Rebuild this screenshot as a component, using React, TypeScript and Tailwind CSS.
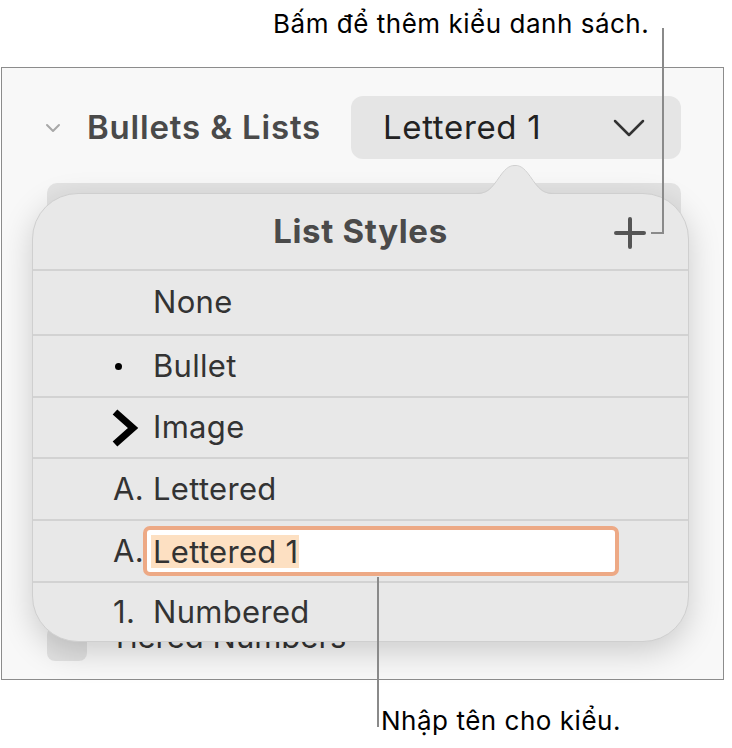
import React from "react";

function Row({
  marker,
  children,
  h,
}: {
  marker?: React.ReactNode;
  children: React.ReactNode;
  h: string;
}) {
  return (
    <div className={`flex items-center border-t-2 border-[#d2d2d2] ${h}`}>
      <div className="w-[80px] shrink-0" />
      <div className="w-[40px] shrink-0 flex items-center">{marker}</div>
      <div className="flex-1 flex items-center">{children}</div>
    </div>
  );
}

const rowText = "text-[31px] tracking-[0.01em] text-[#333]";

export default function App() {
  return (
    <div className="relative w-[732px] h-[748px] bg-white overflow-hidden font-['Inter','Liberation_Sans',sans-serif]">
      {/* top annotation */}
      <div className="h-[67px] pl-[273px] pt-[9px] text-[26px] leading-[30px] tracking-[0.02em] text-black">
        Bấm để thêm kiểu danh sách.
      </div>

      {/* frame */}
      <div className="ml-[1px] w-[723px] h-[613px] border border-[#8c8c8c] bg-[#f8f8f8]">
        <div className="flex items-center h-[63px] mt-[28px]">
          <div className="ml-[40px] w-[22px] flex items-center justify-center">
            <svg width="16" height="10" viewBox="0 0 16 10">
              <path d="M2 2 L8 8 L14 2" fill="none" stroke="#a8a8a8" strokeWidth="2" strokeLinecap="round" strokeLinejoin="round" />
            </svg>
          </div>
          <div className="ml-[23px] text-[33px] tracking-[0.025em] font-semibold text-[#4a4a4a]">Bullets &amp; Lists</div>
          <div className="ml-auto mr-[42px] w-[330px] h-[63px] rounded-[12px] bg-[#e5e5e5] pl-[32px] pr-[36px] flex items-center justify-between">
            <span className="text-[33px] tracking-[0.02em] text-[#222]">Lettered 1</span>
            <svg width="32" height="18" viewBox="0 0 32 18">
              <path d="M2 2 L16 16 L30 2" fill="none" stroke="#333" strokeWidth="2.5" strokeLinecap="round" strokeLinejoin="round" />
            </svg>
          </div>
        </div>
        <div className="mt-[24px] ml-[45px] mr-[42px] h-[56px] rounded-[10px] bg-[#e3e3e3]" />
        <div className="mt-[388px] flex items-start">
          <div className="ml-[45px] w-[40px] h-[34px] rounded-[8px] bg-[#e2e2e2]" />
          <div className="ml-[23px] mt-[-8px] text-[31px] leading-[36px] text-[#333]">Tiered Numbers</div>
        </div>
      </div>

      {/* bottom annotation */}
      <div className="pl-[381px] pt-[26px] text-[26px] leading-[30px] tracking-[0.02em] text-black">Nhập tên cho kiểu.</div>

      {/* popover */}
      <div className="absolute left-[32px] top-[193px] w-[657px] h-[449px] rounded-[46px] bg-[#e8e8e8] border border-[#cfcfcf] shadow-[0_10px_32px_rgba(0,0,0,0.18)] overflow-hidden flex flex-col">
        <div className="h-[75px] shrink-0 relative flex items-center justify-center">
          <span className="text-[33px] tracking-[0.02em] font-bold text-[#4a4a4a]">List Styles</span>
          <svg className="absolute left-[581px] top-[23px]" width="32" height="32" viewBox="0 0 32 32">
            <path d="M16 2 V30 M2 16 H30" stroke="#555" strokeWidth="4" strokeLinecap="round" />
          </svg>
        </div>
        <Row h="h-[65px]">
          <span className={rowText}>None</span>
        </Row>
        <Row
          h="h-[62px]"
          marker={<span className="ml-[2px] w-[7px] h-[7px] rounded-full bg-black" />}
        >
          <span className={rowText}>Bullet</span>
        </Row>
        <Row
          h="h-[61px]"
          marker={
            <svg width="30" height="40" viewBox="0 0 30 40" className="-ml-[2px]">
              <path d="M4 4 L22 20 L4 36" fill="none" stroke="#000" strokeWidth="7" strokeLinejoin="miter" />
            </svg>
          }
        >
          <span className={rowText}>Image</span>
        </Row>
        <Row h="h-[62px]" marker={<span className={rowText}>A.</span>}>
          <span className={rowText}>Lettered</span>
        </Row>
        <div className="flex items-center border-t-2 border-[#d2d2d2] h-[62px]">
          <div className="w-[80px] shrink-0" />
          <div className={`w-[30px] shrink-0 ${rowText}`}>A.</div>
          <div className="w-[476px] h-[50px] rounded-[7px] border-[4px] border-[#eda985] bg-white flex items-center pl-[4px]">
            <span className={`bg-[#fde0c2] leading-[33px] pl-[2px] ${rowText}`}>Lettered 1</span>
          </div>
        </div>
        <Row h="flex-1" marker={<span className={rowText}>1.</span>}>
          <span className={rowText}>Numbered</span>
        </Row>
      </div>

      {/* arrow */}
      <svg className="absolute left-[475px] top-[163px]" width="80" height="34" viewBox="0 0 80 34">
        <path d="M0 31 C10 31 14 29 22 18 C30 6 34 3 40 3 C46 3 50 6 58 18 C66 29 70 31 80 31 L80 34 L0 34 Z" fill="#e8e8e8" />
        <path d="M0 30.5 C10 30.5 14 28.5 22 17.5 C30 5.5 34 2.5 40 2.5 C46 2.5 50 5.5 58 17.5 C66 28.5 70 30.5 80 30.5" fill="none" stroke="#cfcfcf" strokeWidth="1" />
      </svg>

      {/* callout lines */}
      <div className="absolute left-[662px] top-[28px] w-[2px] h-[206px] bg-[#8a8a8a]" />
      <div className="absolute left-[651px] top-[232px] w-[13px] h-[2px] bg-[#8a8a8a]" />
      <div className="absolute left-[377px] top-[577px] w-[2px] h-[150px] bg-[#8a8a8a]" />
    </div>
  );
}
